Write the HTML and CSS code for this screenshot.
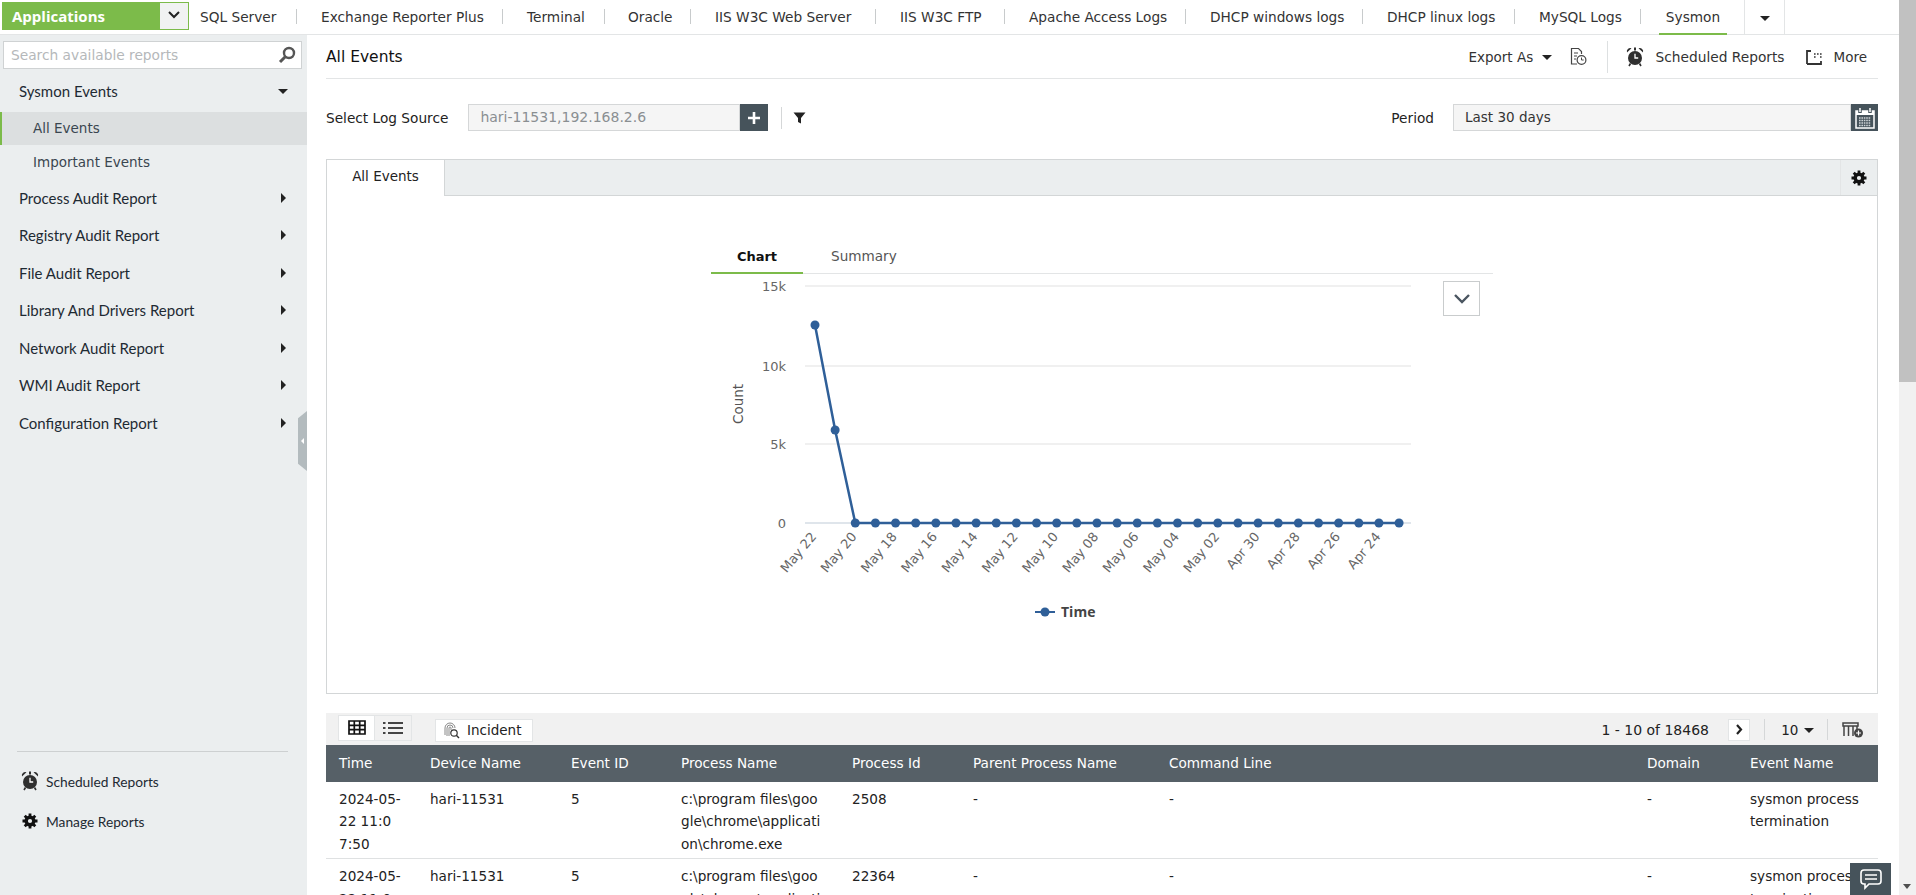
FILE: index.html
```html
<!DOCTYPE html>
<html lang="en">
<head>
<meta charset="utf-8">
<title>All Events</title>
<link rel="stylesheet" href="styles.css">
</head>
<body>
<svg class="defs" width="0" height="0"><defs>
  <g id="gear" fill="none" stroke="#111">
    <circle cx="8" cy="8" r="3.800" stroke-width="3.400"/>
    <path d="M8 0.500v15M0.500 8h15M2.700 2.700l10.600 10.600M13.300 2.700L2.700 13.300" stroke-width="2.800" stroke-dasharray="3.400 8.200"/>
  </g>
  <g id="alarm">
    <circle cx="9" cy="11" r="7" fill="#2f2f2f"/>
    <path d="M9 6.800V11h3.200" fill="none" stroke="#fff" stroke-width="1.300"/>
    <path d="M1 5.500A3.400 3.400 0 0 1 5.500 1.300zM17 5.500A3.400 3.400 0 0 0 12.500 1.300z" fill="#2f2f2f"/>
    <path d="M8 0.500h2v3H8z" fill="#2f2f2f"/>
    <path d="M4.500 16.500L3 19M13.500 16.500L15 19" stroke="#2f2f2f" stroke-width="1.600"/>
  </g>
</defs></svg>
<div class="app">
  <div class="page">
    <header class="topbar">
      <div class="appswitch">
        <span class="appswitch-label">Applications</span>
        <span class="appswitch-drop"><svg width="14" height="10" viewBox="0 0 14 10"><path d="M2 2l5 5 5-5" fill="none" stroke="#222" stroke-width="2"/></svg></span>
      </div>
      <nav class="tabs">
        <a class="tab t1">SQL Server</a>
        <a class="tab t2">Exchange Reporter Plus</a>
        <a class="tab t3">Terminal</a>
        <a class="tab t4">Oracle</a>
        <a class="tab t5">IIS W3C Web Server</a>
        <a class="tab t6">IIS W3C FTP</a>
        <a class="tab t7">Apache Access Logs</a>
        <a class="tab t8">DHCP windows logs</a>
        <a class="tab t9">DHCP linux logs</a>
        <a class="tab t10">MySQL Logs</a>
        <a class="tab tab-active">Sysmon</a>
        <span class="tab-more"><i class="caret-down"></i></span>
      </nav>
    </header>
    <div class="body">
      <aside class="sidebar">
        <div class="search">
          <span class="search-text">Search available reports</span>
          <svg width="18" height="18" viewBox="0 0 18 18"><circle cx="11" cy="7" r="5" fill="none" stroke="#555" stroke-width="2.400"/><path d="M7.500 10.500L2 16" stroke="#555" stroke-width="3"/></svg>
        </div>
        <div class="menu">
          <div class="mi mi-open"><span>Sysmon Events</span><i class="caret-down"></i></div>
          <div class="sub sub-active">All Events</div>
          <div class="sub">Important Events</div>
          <div class="mi"><span>Process Audit Report</span><i class="caret-right"></i></div>
          <div class="mi"><span>Registry Audit Report</span><i class="caret-right"></i></div>
          <div class="mi"><span>File Audit Report</span><i class="caret-right"></i></div>
          <div class="mi"><span>Library And Drivers Report</span><i class="caret-right"></i></div>
          <div class="mi"><span>Network Audit Report</span><i class="caret-right"></i></div>
          <div class="mi"><span>WMI Audit Report</span><i class="caret-right"></i></div>
          <div class="mi"><span>Configuration Report</span><i class="caret-right"></i></div>
        </div>
        <div class="side-foot">
          <div class="foot-item">
            <svg width="18" height="20" viewBox="0 0 18 20"><use href="#alarm"/></svg>
            <span>Scheduled Reports</span>
          </div>
          <div class="foot-item">
            <svg width="18" height="16" viewBox="-1 0 18 16"><use href="#gear"/></svg>
            <span>Manage Reports</span>
          </div>
        </div>
        <div class="side-handle"><i></i></div>
      </aside>
      <main class="main">
        <div class="head">
          <h1 class="title">All Events</h1>
          <div class="actions">
            <span class="act">Export As <i class="caret-down small"></i></span>
            <svg class="act-ico" width="17" height="19" viewBox="0 0 17 19"><path d="M7 17H1.500V1.500h7l3 3V7" fill="none" stroke="#444" stroke-width="1.200"/><path d="M4 6h4M4 9h3M4 12h2" stroke="#444"/><circle cx="11.500" cy="13" r="4.400" fill="#fff" stroke="#444" stroke-width="1.200"/><path d="M11.500 10.500V13h2.200" fill="none" stroke="#444"/></svg>
            <span class="act-sep"></span>
            <svg class="act-ico2" width="18" height="20" viewBox="0 0 18 20"><use href="#alarm"/></svg>
            <span class="act act-sched">Scheduled Reports</span>
            <svg class="act-more" width="16" height="16" viewBox="0 0 16 16"><path d="M1 15V2h4M1 15h14v-3" fill="none" stroke="#333" stroke-width="1.800"/><path d="M8 5h1.600M11 5h1.600M14 5h1.600M8 8h1.600M14 8h1.600" stroke="#333" stroke-width="1.600"/></svg>
            <span class="act act-moretext">More</span>
          </div>
        </div>
        <div class="filters">
          <label class="flabel">Select Log Source</label>
          <div class="field source">hari-11531,192.168.2.6</div>
          <button class="sq-btn plus"><svg width="14" height="14" viewBox="0 0 14 14"><path d="M7 1v12M1 7h12" stroke="#fff" stroke-width="2.600"/></svg></button>
          <span class="fsep"></span>
          <svg class="funnel" width="13" height="12" viewBox="0 0 13 12"><path d="M0.500 0.500h12L8 6v5.500L5 10V6z" fill="#222"/></svg>
          <label class="flabel period-label">Period</label>
          <div class="field period">Last 30 days</div>
          <button class="sq-btn cal"><svg width="20" height="22" viewBox="0 0 20 22"><path d="M1 4h18v17H1z" fill="#46535b" stroke="#fff" stroke-width="1.500"/><path d="M1 4h18v4H1z" fill="#fff"/><path d="M5 1v5M15 1v5" stroke="#46535b" stroke-width="3.500"/><path d="M5 1v4M15 1v4" stroke="#fff" stroke-width="1.500"/><path d="M4 11h12M4 13.500h12M4 16h12M4 18.500h12" stroke="#cfd4d7" stroke-width="1.500" stroke-dasharray="1.600 .8"/></svg></button>
        </div>
        <section class="panel">
          <div class="panel-tabs">
            <div class="panel-tab">All Events</div>
            <div class="panel-gear"><svg width="16" height="16" viewBox="0 0 16 16"><use href="#gear"/></svg></div>
          </div>
          <div class="panel-body">
            <div class="chart-tabs">
              <span class="ct ct-active">Chart</span>
              <span class="ct">Summary</span>
            </div>
            <div class="chart-wrap">
              <svg class="chart" id="chart" width="800" height="380" viewBox="700 274 800 380"></svg>
              <button class="chart-menu"><svg width="18" height="12" viewBox="0 0 18 12"><path d="M2 2l7 7 7-7" fill="none" stroke="#4a5560" stroke-width="2.400"/></svg></button>
            </div>
          </div>
        </section>
        <div class="toolbar">
          <div class="views">
            <span class="view view-on"><svg width="18" height="15" viewBox="0 0 18 15"><path d="M1 1h16v13H1zM1 5.300h16M1 9.700h16M6.300 1v13M11.700 1v13" fill="none" stroke="#111" stroke-width="1.700"/></svg></span>
            <span class="view"><svg width="20" height="14" viewBox="0 0 20 14"><path d="M5 2h15M5 7h15M5 12h15" stroke="#444" stroke-width="1.800"/><path d="M0 2h2.500M0 7h2.500M0 12h2.500" stroke="#444" stroke-width="2"/></svg></span>
          </div>
          <span class="incident"><svg width="17" height="18" viewBox="0 0 17 18"><path d="M2 14V7a5 5 0 0 1 10 0M4 15V7a3 3 0 0 1 6 0M6 15V7a1 1 0 0 1 2 0v2" fill="none" stroke="#888" stroke-width="1"/><circle cx="11" cy="12" r="3.200" fill="#fff" stroke="#333" stroke-width="1.200"/><path d="M13.300 14.300L16 17" stroke="#333" stroke-width="1.400"/></svg>Incident</span>
          <div class="pager">
            <span class="pager-text">1 - 10 of 18468</span>
            <span class="pager-next"><svg width="9" height="11" viewBox="0 0 9 11"><path d="M2 1l4 4.500L2 10" fill="none" stroke="#222" stroke-width="2.200"/></svg></span>
            <span class="pager-sep"></span>
            <span class="pager-size">10 <i class="caret-down small"></i></span>
            <span class="pager-sep"></span>
            <svg class="addcol" width="22" height="16" viewBox="0 0 22 16"><path d="M1 1h15v3H1zM2 4v10M6.500 4v10M11 4v10M15 4v5" fill="none" stroke="#444" stroke-width="1.500"/><circle cx="16.500" cy="11" r="4.500" fill="#444"/><path d="M16.500 8.500v5M14 11h5" stroke="#fff" stroke-width="1.200"/></svg>
          </div>
        </div>
        <table class="grid">
          <colgroup>
            <col class="c1"><col class="c2"><col class="c3"><col class="c4"><col class="c5"><col class="c6"><col class="c7"><col class="c8"><col class="c9">
          </colgroup>
          <thead>
            <tr><th>Time</th><th>Device Name</th><th>Event ID</th><th>Process Name</th><th>Process Id</th><th>Parent Process Name</th><th>Command Line</th><th>Domain</th><th>Event Name</th></tr>
          </thead>
          <tbody>
            <tr><td>2024-05-<br>22 11:0<br>7:50</td><td>hari-11531</td><td>5</td><td>c:\program files\goo<br>gle\chrome\applicati<br>on\chrome.exe</td><td>2508</td><td>-</td><td>-</td><td>-</td><td>sysmon process<br>termination</td></tr>
            <tr><td>2024-05-<br>22 11:0<br>7:49</td><td>hari-11531</td><td>5</td><td>c:\program files\goo<br>gle\chrome\applicati<br>on\chrome.exe</td><td>22364</td><td>-</td><td>-</td><td>-</td><td>sysmon process<br>termination</td></tr>
          </tbody>
        </table>
      </main>
    </div>
  </div>
  <div class="scrollbar">
    <div class="thumb"></div>
    <i class="scroll-arrow"></i>
  </div>
  <button class="chat"><svg width="24" height="24" viewBox="0 0 24 24"><path d="M5 3h14a3 3 0 0 1 3 3v8a3 3 0 0 1-3 3H10l-4 4v-4H5a3 3 0 0 1-3-3V6a3 3 0 0 1 3-3z" fill="none" stroke="#fff" stroke-width="1.600"/><path d="M6 8h12M6 12h12" stroke="#fff" stroke-width="1.600"/></svg></button>
</div>
<script src="chart.js"></script>
</body>
</html>
```
FILE: styles.css
```css
* { box-sizing: border-box; }
html, body { margin: 0; padding: 0; height: 100%; overflow: hidden; background: #fff; }
body { font-family: "DejaVu Sans", Verdana, sans-serif; font-size: 13px; color: #222; }
.defs { position: absolute; }
.app { display: flex; width: 1916px; height: 895px; overflow: hidden; position: relative; }
.page { width: 1899px; flex: none; display: flex; flex-direction: column; }

.topbar { height: 35px; flex: none; display: flex; border-bottom: 1px solid #e3e5e6; padding: 2px 0 0 2px; }
.appswitch { width: 187px; height: 28px; display: flex; border: 1px solid #7cbb4a; background: #7cbb4a; }
.appswitch-label { flex: 1; color: #fff; font-weight: 700; font-size: 15px; font-family: "Open Sans", sans-serif; padding-left: 9px; line-height: 26px; }
.appswitch-drop { width: 28px; background: #f1f2f2; display: flex; align-items: center; justify-content: center; padding-bottom: 3px; }
.tabs { display: flex; height: 33px; margin-top: -2px; flex: none; margin-left: 11px; color: #333; font-size: 13.700px; }
.tab { position: relative; line-height: 35px; height: 33px; white-space: nowrap; flex: none; padding-left: 24px; }
.tab::after { content: ""; position: absolute; right: 0; top: 9px; height: 15px; width: 1px; background: #c8cbcc; }
.t1 { width: 97px; padding-left: 0; }
.t2 { width: 206px; }
.t3 { width: 102px; }
.t4 { width: 86px; padding-left: 23px; }
.t5 { width: 185px; }
.t6 { width: 129px; }
.t7 { width: 181px; }
.t8 { width: 177px; }
.t9 { width: 152px; }
.t10 { width: 126px; }
.tab-active { width: 68px; padding-left: 0; margin-left: 18px; text-align: center; border-bottom: 2px solid #7cbb4a; height: 35px; }
.tab-active::after { display: none; }
.tab-more { width: 41px; margin-left: 17px; height: 34px; border-left: 1px solid #e3e5e6; border-right: 1px solid #e3e5e6; display: flex; justify-content: center; padding-top: 16px; }

.caret-down { display: inline-block; width: 0; height: 0; border-left: 5px solid transparent; border-right: 5px solid transparent; border-top: 5px solid #222; }
.caret-down.small { border-width: 5px 5px 0; vertical-align: 2px; margin-left: 4px; }
.caret-right { display: inline-block; width: 0; height: 0; border-top: 5px solid transparent; border-bottom: 5px solid transparent; border-left: 5px solid #222; }

.body { display: flex; flex: 1; min-height: 0; }
.sidebar { width: 307px; flex: none; background: #ebeeef; display: flex; flex-direction: column; position: relative; font-family: Lato, sans-serif; font-size: 15px; color: #1e2a33; }
.search { margin: 6px 0 0 3px; width: 299px; height: 28px; background: #fff; border: 1px solid #cfd2d3; display: flex; align-items: center; justify-content: space-between; padding: 0 5px 0 7px; font-family: "DejaVu Sans", sans-serif; font-size: 13.750px; color: #b5b8ba; }
.menu { margin-top: 3px; }
.mi { display: flex; justify-content: space-between; align-items: center; height: 37.500px; padding: 0 21px 0 19px; }
.mi-open { height: 38px; padding-right: 19px; }
.mi-open + .sub { margin-top: 2px; }
.sub { height: 33px; line-height: 33px; padding-left: 33px; color: #3a4650; font-family: "DejaVu Sans", sans-serif; font-size: 13.500px; }
.sub + .sub { height: 34px; line-height: 34px; }
.sub-active { background: #dcdfe0; border-left: 2px solid #7cbb4a; padding-left: 31px; }
.side-foot { margin: auto 19px 0 17px; border-top: 1px solid #cdd0d1; padding-top: 18px; height: 144px; font-size: 13.750px; flex: none; }
.foot-item { display: flex; align-items: center; gap: 7px; height: 22px; margin-bottom: 18px; padding-left: 4px; color: #1e2a33; }
.side-handle { position: absolute; right: 0; top: 376px; width: 9px; height: 60px; background: #b3bbbe; clip-path: polygon(100% 0, 100% 100%, 0 88%, 0 12%); display: flex; align-items: center; justify-content: center; }
.side-handle i { display: block; width: 0; height: 0; border-top: 3px solid transparent; border-bottom: 3px solid transparent; border-right: 3px solid #fff; }

.main { width: 1571px; flex: none; padding: 0 0 0 19px; margin-right: 21px; overflow: hidden; }
.head { height: 44px; border-bottom: 1px solid #e3e5e6; display: flex; align-items: center; justify-content: space-between; width: 1552px; }
.title { font-size: 15.500px; font-weight: 400; color: #111; margin: 0; }
.actions { display: flex; align-items: center; color: #333; font-size: 13.500px; position: relative; }
.act-ico { margin-left: 18px; }
.act-sep { width: 1px; height: 32px; background: #dde0e1; margin: 0 18px 0 20px; }
.act-ico2 { margin-right: 12px; }
.act-sched { margin-right: 21px; font-size: 13.750px; }
.act-more { margin-right: 12px; }
.act-moretext { margin-right: 11px; }

.filters { display: flex; align-items: center; height: 27px; margin-top: 25px; width: 1552px; }
.flabel { font-size: 13.700px; color: #222; }
.field { height: 27px; line-height: 25px; border: 1px solid #d5d7d8; background: #f5f5f5; padding-left: 11px; font-size: 13.500px; }
.source { width: 272px; margin-left: 20px; color: #8a8f92; font-size: 14px; }
.sq-btn { width: 27px; height: 27px; border: 0; padding: 0; background: #46535b; display: flex; align-items: center; justify-content: center; flex: none; }
.plus { width: 28px; }
.fsep { width: 1px; height: 22px; background: #d5d7d8; margin: 0 11px 0 13px; }
.funnel { flex: none; }
.period-label { margin-left: auto; }
.period { width: 398px; margin-left: 19px; color: #333; }

.panel { width: 1552px; height: 535px; margin-top: 28px; border: 1px solid #d3d6d7; }
.panel-tabs { height: 36px; background: #ebeeef; border-bottom: 1px solid #d3d6d7; display: flex; justify-content: space-between; }
.panel-tab { width: 118px; height: 36px; line-height: 32px; background: #fff; border-right: 1px solid #d3d6d7; text-align: center; font-size: 13.500px; }
.panel-gear { width: 37px; border-left: 1px solid #e3e5e6; display: flex; align-items: center; justify-content: center; }
.panel-body { position: relative; }
.chart-tabs { display: flex; margin: 41px 0 0 384px; width: 782px; height: 37px; border-bottom: 1px solid #e3e5e6; }
.ct { font-size: 13.600px; color: #555; line-height: 39px; height: 37px; padding-left: 28px; width: 120px; }
.ct-active { width: 92px; padding-left: 0; text-align: center; font-size: 13px; font-weight: 700; color: #111; border-bottom: 2px solid #7cbb4a; }
.chart-wrap { position: relative; margin-left: 373px; }
.chart { display: block; }
.chart text { font-family: "DejaVu Sans", sans-serif; fill: #666; font-size: 13px; }
.chart .axis-title { font-size: 13.500px; fill: #555; }
.chart .legend { font-family: "Open Sans", sans-serif; font-size: 14px; font-weight: 700; fill: #444; }
.chart-menu { position: absolute; left: 743px; top: 7px; width: 37px; height: 35px; background: #fff; border: 1px solid #c9cccd; padding: 0; display: flex; align-items: center; justify-content: center; }

.toolbar { width: 1552px; height: 32px; margin-top: 19px; background: #f1f1f1; display: flex; align-items: center; padding-left: 12px; }
.views { display: flex; border: 1px solid #e3e5e6; height: 26px; margin-top: -3px; }
.view { width: 36px; display: flex; align-items: center; justify-content: center; background: #f1f1f1; }
.view-on { background: #fff; border-right: 1px solid #e3e5e6; }
.incident { margin-left: 23px; height: 23px; background: #fff; border: 1px solid #e3e5e6; display: flex; align-items: center; gap: 7px; padding: 0 7px; font-size: 13.500px; width: 98px; white-space: nowrap; margin-top: 2px; }
.pager { margin-left: auto; display: flex; align-items: center; font-size: 14px; margin-top: 1px; }
.pager-text { color: #222; }
.pager-next { width: 22px; height: 22px; margin-left: 19px; background: #fff; border: 1px solid #e3e5e6; display: flex; align-items: center; justify-content: center; }
.pager-sep { width: 1px; height: 21px; background: #d5d7d8; }
.pager-next + .pager-sep { margin-left: 14px; }
.pager-size { width: 62px; text-align: center; font-size: 13.500px; padding-left: 3px; }
.pager-size .caret-down.small { margin-left: 1px; }
.addcol { margin: 0 14px 0 14px; }

.grid { width: 1552px; border-collapse: collapse; table-layout: fixed; font-size: 13.600px; color: #222; }
.c1 { width: 91px; } .c2 { width: 141px; } .c3 { width: 110px; } .c4 { width: 171px; } .c5 { width: 121px; } .c6 { width: 196px; } .c7 { width: 478px; } .c8 { width: 103px; } .c9 { width: 141px; }
.grid th { height: 37px; background: #566067; color: #fff; font-weight: 400; text-align: left; padding: 0 0 2px 13px; white-space: nowrap; }
.grid td { padding: 6px 0 3px 13px; vertical-align: top; line-height: 22.400px; border-bottom: 1px solid #dfe1e2; white-space: nowrap; }

.scrollbar { width: 17px; flex: none; background: #f1f1f1; position: relative; }
.thumb { height: 382px; background: #c1c1c1; }
.scroll-arrow { position: absolute; left: 4px; bottom: 6px; width: 0; height: 0; border-left: 4.500px solid transparent; border-right: 4.500px solid transparent; border-top: 5px solid #505050; }
.chat { position: absolute; left: 1850px; top: 863px; width: 41px; height: 32px; border: 0; background: #46535b; padding: 4px 0 0; display: flex; align-items: flex-start; justify-content: center; }
```
FILE: chart.js
```js
var NS = "http://www.w3.org/2000/svg";
var svg = document.getElementById("chart");
function el(name, attrs, text) {
  var n = document.createElementNS(NS, name);
  for (var k in attrs) n.setAttribute(k, attrs[k]);
  if (text) n.textContent = text;
  svg.appendChild(n);
  return n;
}
[[286, "15k"], [366, "10k"], [444, "5k"], [523, "0"]].forEach(function (t) {
  el("line", { x1: 805, x2: 1411, y1: t[0], y2: t[0], stroke: t[1] === "0" ? "#d5dce4" : "#ebebeb", "stroke-width": 1.5 });
  el("text", { x: 786, y: t[0] + 5, "text-anchor": "end" }, t[1]);
});
el("text", { class: "axis-title", transform: "translate(743 404) rotate(-90)", "text-anchor": "middle" }, "Count");
var pts = [];
for (var i = 0; i < 30; i++) {
  pts.push([815 + i * 20.14, i === 0 ? 325 : i === 1 ? 430 : 523]);
}
el("polyline", { points: pts.map(function (p) { return p.join(","); }).join(" "), fill: "none", stroke: "#2f5f98", "stroke-width": 2.5 });
pts.forEach(function (p) { el("circle", { cx: p[0], cy: p[1], r: 4.500, fill: "#2f5f98" }); });
var labels = ["May 22", "May 20", "May 18", "May 16", "May 14", "May 12", "May 10", "May 08", "May 06", "May 04", "May 02", "Apr 30", "Apr 28", "Apr 26", "Apr 24"];
labels.forEach(function (l, i) {
  var x = 817 + i * 40.3;
  el("text", { transform: "translate(" + x + " 537) rotate(-50)", "text-anchor": "end" }, l);
});
el("line", { x1: 1035, x2: 1055, y1: 612, y2: 612, stroke: "#2f5f98", "stroke-width": 2 });
el("circle", { cx: 1045, cy: 612, r: 4.500, fill: "#2f5f98" });
el("text", { class: "legend", x: 1061, y: 617 }, "Time");
```
